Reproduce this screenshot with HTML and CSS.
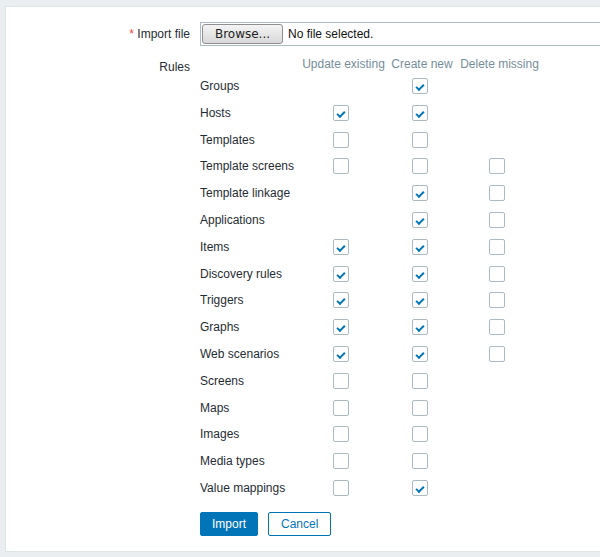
FILE: index.html
```html
<!DOCTYPE html>
<html>
<head>
<meta charset="utf-8">
<link rel="stylesheet" href="styles.css">
</head>
<body>
<div class="panel">
  <form class="form">
    <label class="label label-file"><span class="req">*</span> Import file</label>
    <div class="file-input">
      <span class="browse">Browse...</span>
      <span class="file-name">No file selected.</span>
    </div>

    <div class="label label-rules">Rules</div>
    <div class="rules">
      <div class="hcell"></div>
      <div class="hcell head">Update existing</div>
      <div class="hcell head">Create new</div>
      <div class="hcell head">Delete missing</div>

      <div class="name">Groups</div>
      <div class="cell"></div>
      <div class="cell"><span class="cb on"></span></div>
      <div class="cell"></div>

      <div class="name">Hosts</div>
      <div class="cell"><span class="cb on"></span></div>
      <div class="cell"><span class="cb on"></span></div>
      <div class="cell"></div>

      <div class="name">Templates</div>
      <div class="cell"><span class="cb"></span></div>
      <div class="cell"><span class="cb"></span></div>
      <div class="cell"></div>

      <div class="name">Template screens</div>
      <div class="cell"><span class="cb"></span></div>
      <div class="cell"><span class="cb"></span></div>
      <div class="cell"><span class="cb"></span></div>

      <div class="name">Template linkage</div>
      <div class="cell"></div>
      <div class="cell"><span class="cb on"></span></div>
      <div class="cell"><span class="cb"></span></div>

      <div class="name">Applications</div>
      <div class="cell"></div>
      <div class="cell"><span class="cb on"></span></div>
      <div class="cell"><span class="cb"></span></div>

      <div class="name">Items</div>
      <div class="cell"><span class="cb on"></span></div>
      <div class="cell"><span class="cb on"></span></div>
      <div class="cell"><span class="cb"></span></div>

      <div class="name">Discovery rules</div>
      <div class="cell"><span class="cb on"></span></div>
      <div class="cell"><span class="cb on"></span></div>
      <div class="cell"><span class="cb"></span></div>

      <div class="name">Triggers</div>
      <div class="cell"><span class="cb on"></span></div>
      <div class="cell"><span class="cb on"></span></div>
      <div class="cell"><span class="cb"></span></div>

      <div class="name">Graphs</div>
      <div class="cell"><span class="cb on"></span></div>
      <div class="cell"><span class="cb on"></span></div>
      <div class="cell"><span class="cb"></span></div>

      <div class="name">Web scenarios</div>
      <div class="cell"><span class="cb on"></span></div>
      <div class="cell"><span class="cb on"></span></div>
      <div class="cell"><span class="cb"></span></div>

      <div class="name">Screens</div>
      <div class="cell"><span class="cb"></span></div>
      <div class="cell"><span class="cb"></span></div>
      <div class="cell"></div>

      <div class="name">Maps</div>
      <div class="cell"><span class="cb"></span></div>
      <div class="cell"><span class="cb"></span></div>
      <div class="cell"></div>

      <div class="name">Images</div>
      <div class="cell"><span class="cb"></span></div>
      <div class="cell"><span class="cb"></span></div>
      <div class="cell"></div>

      <div class="name">Media types</div>
      <div class="cell"><span class="cb"></span></div>
      <div class="cell"><span class="cb"></span></div>
      <div class="cell"></div>

      <div class="name">Value mappings</div>
      <div class="cell"><span class="cb"></span></div>
      <div class="cell"><span class="cb on"></span></div>
      <div class="cell"></div>
    </div>

    <div class="spacer"></div>
    <div class="buttons">
      <button type="button" class="btn btn-primary">Import</button>
      <button type="button" class="btn btn-alt">Cancel</button>
    </div>
  </form>
</div>
</body>
</html>
```

FILE: styles.css
```css
html, body {
  margin: 0;
  padding: 0;
  overflow: hidden;
}
body {
  background: #ebeef0;
  font-family: "Liberation Sans", Arial, sans-serif;
  font-size: 12px;
  color: #1f2c33;
  height: 557px;
}
.panel {
  margin: 6px 0 0 5px;
  width: 700px;
  background: #ffffff;
  border: 1px solid #dfe4e7;
  padding: 15px 0 15px 0;
}
.form {
  display: grid;
  grid-template-columns: 184px 1fr;
  column-gap: 10px;
  row-gap: 0;
}
.label {
  text-align: right;
  white-space: nowrap;
}
.label-file {
  line-height: 24px;
}
.req {
  color: #e54545;
}
.label-rules {
  margin-top: 10.4px;
  padding-top: 3px;
  line-height: 16px;
}
.file-input {
  width: 453px;
  height: 22px;
  border: 1px solid #acbbc2;
  display: flex;
  align-items: center;
  box-sizing: content-box;
}
.browse {
  margin-left: 1px;
  width: 79px;
  height: 18px;
  border: 1px solid #8f8f8f;
  border-radius: 3px;
  background: linear-gradient(#f4f4f4, #d9d9d9);
  color: #222;
  font-family: "DejaVu Sans", sans-serif;
  font-size: 12px;
  display: flex;
  align-items: center;
  justify-content: center;
}
.file-name {
  margin-left: 5px;
  color: #111;
  font-family: "Liberation Sans", Arial, sans-serif;
  font-size: 12px;
}
.rules {
  margin-top: 10.4px;
  display: grid;
  grid-template-columns: 98.5px 90px 67px 88px;
  grid-template-rows: 16.2px;
  grid-auto-rows: 26.8px;
  align-items: center;
}
.hcell {
  line-height: 16.2px;
  white-space: nowrap;
  text-align: center;
}
.head {
  color: #768d99;
}
.name {
  white-space: nowrap;
}
.cell {
  display: flex;
  justify-content: center;
  align-items: center;
  height: 100%;
}
.cb {
  display: block;
  width: 14px;
  height: 14px;
  border: 1px solid #acbbc2;
  border-radius: 2px;
  margin-right: 5px;
  background: #fff;
  position: relative;
}
.cb.on::after {
  content: "";
  position: absolute;
  left: 4px;
  top: 2px;
  width: 6px;
  height: 3px;
  border-left: 2px solid #0275b8;
  border-bottom: 2px solid #0275b8;
  transform: translate(-1px, 3px) rotate(-45deg);
  transform-origin: center;
}
.spacer {
  height: 0;
}
.buttons {
  margin-top: 10.6px;
  display: flex;
  gap: 10px;
}
.btn {
  height: 24px;
  padding: 0 11px;
  border-radius: 2px;
  font-family: "Liberation Sans", Arial, sans-serif;
  font-size: 12px;
  border: 1px solid #0275b8;
  cursor: pointer;
  line-height: 22px;
}
.btn-primary {
  background: #0275b8;
  color: #ffffff;
}
.btn-alt {
  background: #ffffff;
  color: #0275b8;
  padding: 0 12px;
}
```
